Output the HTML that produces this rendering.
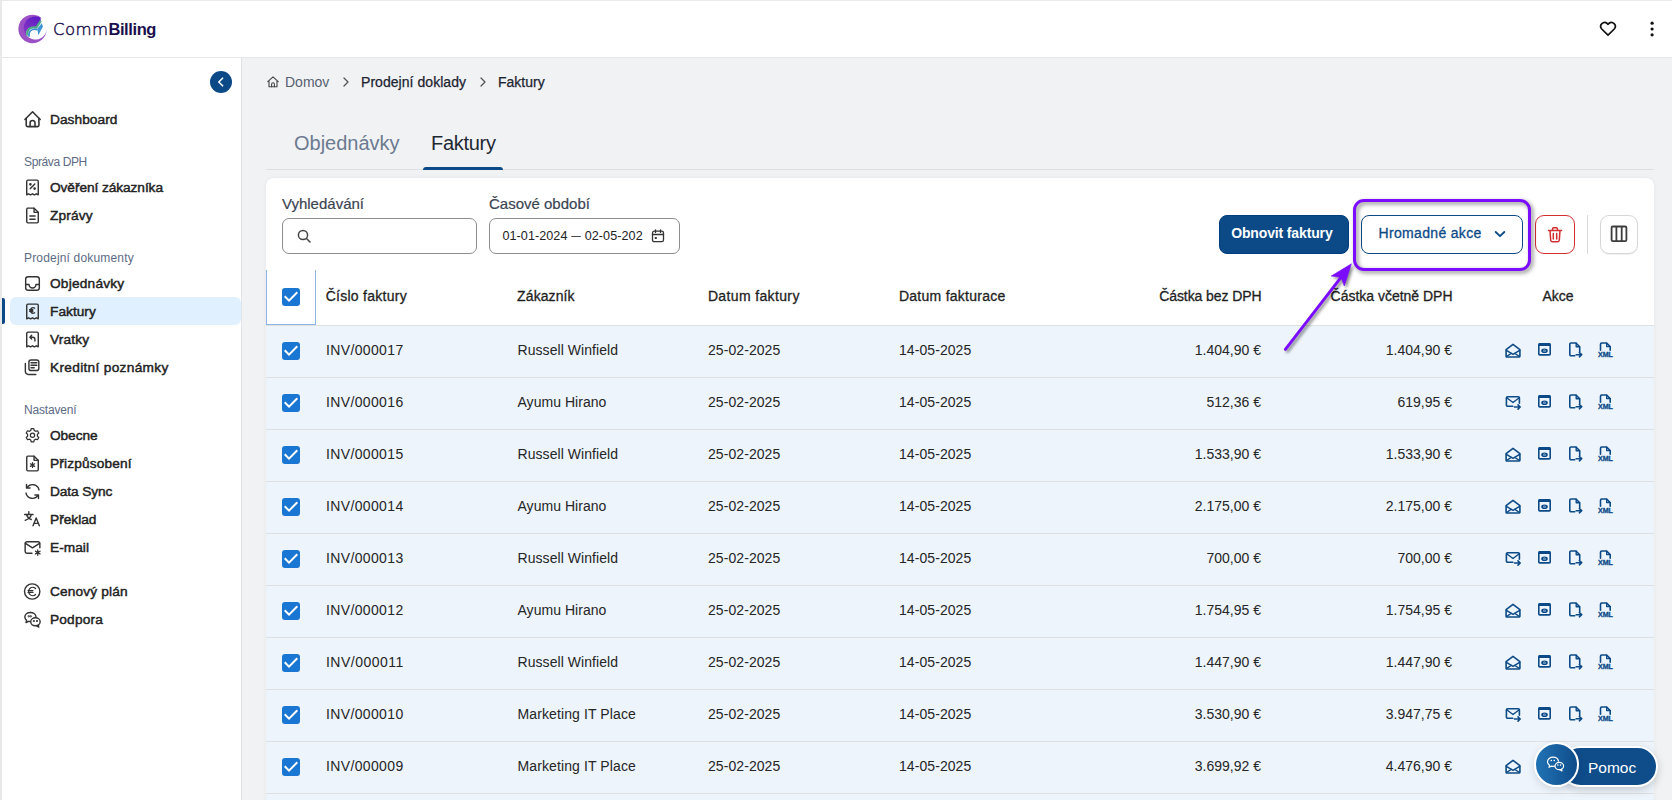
<!DOCTYPE html>
<html lang="cs">
<head>
<meta charset="utf-8">
<title>CommBilling – Faktury</title>
<style>
*{box-sizing:border-box;margin:0;padding:0}
html,body{width:1672px;height:800px;overflow:hidden;background:#f1f2f4;font-family:"Liberation Sans",sans-serif;color:#1f2937}
.abs{position:absolute}
#frameL{left:0;top:0;width:2px;height:800px;background:#e9e9e9}
#frameT{left:0;top:0;width:1672px;height:1px;background:#e9e9e9}
#header{left:2px;top:1px;width:1670px;height:57px;background:#fff;border-bottom:1px solid #e6e7ea}
#sidebar{left:2px;top:58px;width:240px;height:742px;background:#fff;border-right:1px solid #dfe3ea}
.nav{position:absolute;left:50px;font-size:13.7px;-webkit-text-stroke:.45px #222;color:#222;white-space:nowrap;line-height:20px;height:20px}
.navlbl{position:absolute;left:24px;font-size:12px;color:#5d6b85;white-space:nowrap;line-height:16px;height:16px}
.ico{position:absolute;left:21.5px;width:21px;height:21px;fill:none;stroke:#333;stroke-width:1.35;stroke-linecap:round;stroke-linejoin:round}
#active{left:10px;top:297px;width:230.6px;height:28px;background:#e1f0fe;border-radius:6px}
#activebar{left:2px;top:298px;width:3px;height:25.5px;background:#0c4a87;border-radius:0 2px 2px 0}
#collapse{left:210px;top:71px;width:22px;height:22px;border-radius:50%;background:#0c4a87}
.bc{position:absolute;top:74px;font-size:14px;line-height:16px;white-space:nowrap}
.tab{position:absolute;top:130px;font-size:20px;line-height:26px;white-space:nowrap}
#tabline{left:266px;top:169px;width:1388px;height:1px;background:#dcdfe4}
#tabul{left:423px;top:167px;width:80px;height:3px;background:#0c4a87;border-radius:3px 3px 0 0}
#card{left:266px;top:178px;width:1388px;height:640px;background:#fff;border-radius:8px 8px 0 0;box-shadow:0 0 5px rgba(0,0,0,.05)}
.flabel{position:absolute;top:196px;font-size:15px;line-height:16px;color:#3b4452;-webkit-text-stroke:.2px #3b4452;white-space:nowrap}
.inp{position:absolute;top:218px;height:36px;border:1px solid #8d8d8d;border-radius:7px;background:#fff}
.btn{position:absolute;top:215px;height:39px;border-radius:8px;white-space:nowrap;font-size:14px;line-height:34px;text-align:center}
.th{position:absolute;top:287px;font-size:14px;line-height:18px;color:#1f1f1f;-webkit-text-stroke:.3px #1f1f1f;white-space:nowrap}
.row{position:absolute;left:266px;width:1388px;height:52px;background:#edf4fc;border-bottom:1px solid #e0e0e0}
.row span{position:absolute;top:15px;font-size:14px;line-height:18px;color:#262626;white-space:nowrap}
.cb{position:absolute;width:18px;height:18px;border-radius:3px;background:#1976d2}
.cb svg{position:absolute;left:0;top:0}
.ai{position:absolute;top:15px;width:18px;height:18px;fill:none;stroke:#0c4a87;stroke-width:1.6;stroke-linecap:round;stroke-linejoin:round}
</style>
</head>
<body>
<div id="header" class="abs"></div>
<svg class="abs" style="left:12px;top:8px" width="48" height="42" viewBox="0 0 48 42">
<defs><linearGradient id="lg1" x1="0.7" y1="0" x2="0.2" y2="1"><stop offset="0" stop-color="#5f1cc4"/><stop offset="1" stop-color="#8a3cc6"/></linearGradient></defs>
<path d="M28.700 9.300A14.200 14.200 0 1 0 34.750 20.500A11.300 11.300 0 1 1 28.300 10.100z" fill="#9c50c5"/>
<path d="M28.500 9.600A11.800 11.800 0 0 0 14.400 27.900C13.600 22 16.500 18.400 24 19.400L28.800 12.500z" fill="url(#lg1)"/>
<path d="M15.300 27.600C14.500 22 17.500 18.600 24.300 19.600L28.800 12.900" fill="none" stroke="#4ea98b" stroke-width="2.300" stroke-linejoin="miter"/>
<path d="M25.300 20.800 29.700 15.200 31 18.400 26.300 27.300z" fill="#3f97d8"/>
<path d="M17 28.800C16 23.500 19.500 20.300 25.500 21.700" fill="none" stroke="#3d8fd0" stroke-width="1.500"/>
</svg><div class="abs" style="left:53px;top:16.500px;font-size:16.500px;line-height:24px;color:#1b0f4d;white-space:nowrap"><span style="font-family:'DejaVu Sans','Liberation Sans',sans-serif;font-weight:200;-webkit-text-stroke:0.45px #1b0f4d;letter-spacing:0.4px">Comm</span><span style="font-weight:bold;letter-spacing:-0.4px">Billing</span></div><svg class="abs" style="left:1598px;top:19px" width="20" height="20" viewBox="0 0 20 20" fill="none" stroke="#111" stroke-width="1.7" stroke-linejoin="round"><path d="M10 16.200 3.700 10a3.900 3.900 0 0 1 5.500-5.500l.8.800.8-.8A3.900 3.900 0 0 1 16.300 10z"/></svg><svg class="abs" style="left:1648px;top:19px" width="8" height="20" viewBox="0 0 8 20" fill="#111"><circle cx="4.100" cy="4.200" r="1.600"/><circle cx="4.100" cy="10" r="1.600"/><circle cx="4.100" cy="15.800" r="1.600"/></svg>
<div id="sidebar" class="abs"></div>
<div id="active" class="abs"></div><div id="activebar" class="abs"></div>
<div id="collapse" class="abs"><svg width="22" height="22" viewBox="0 0 22 22" fill="none" stroke="#fff" stroke-width="1.6" stroke-linecap="round" stroke-linejoin="round"><path d="M12.600 7.200 8.800 11l3.800 3.800"/></svg></div>
<svg class="ico" style="top:108.5px" viewBox="1 1 18 18"><path d="M3.500 10 10.050 3.400 16.600 10"/><path d="M4.600 9V15a1.100 1.100 0 0 0 1.100 1.100H14.400a1.100 1.100 0 0 0 1.100-1.100V9"/><path d="M7.950 16V12.900a2.100 2.100 0 0 1 4.200 0V16"/></svg>
<div class="nav" style="top:110px;letter-spacing:0.054px">Dashboard</div>
<div class="navlbl" style="top:154px;letter-spacing:-0.378px">Správa DPH</div>
<svg class="ico" style="top:176.5px" viewBox="0 0 20 20"><path d="M4.500 17V4.200a1.200 1.200 0 0 1 1.200-1.200h8.600a1.200 1.200 0 0 1 1.200 1.200V17l-1.800-1-1.900 1-1.800-1-1.800 1-1.900-1z"/><path d="M7.800 11.200l4.400-4.600"/><circle cx="8" cy="7" r=".6"/><circle cx="12" cy="11" r=".6"/></svg>
<div class="nav" style="top:178px;letter-spacing:-0.07px">Ověření zákazníka</div>
<svg class="ico" style="top:204.5px" viewBox="0 0 20 20"><path d="M5 3h6.500L15.500 7v8.800a1.200 1.200 0 0 1-1.200 1.200H5.700a1.200 1.200 0 0 1-1.200-1.200V4.200A1.200 1.200 0 0 1 5.700 3z"/><path d="M11.500 3v4h4"/><path d="M7.500 10.500h5M7.500 13.500h5"/></svg>
<div class="nav" style="top:206px;letter-spacing:0.151px">Zprávy</div>
<div class="navlbl" style="top:250px;letter-spacing:0.174px">Prodejní dokumenty</div>
<svg class="ico" style="top:272.5px" viewBox="0 0 20 20"><rect x="3.500" y="3.500" width="13" height="13" rx="2.500"/><path d="M3.500 11h3.200a3.300 3.300 0 0 0 6.600 0h3.200"/></svg>
<div class="nav" style="top:274px;letter-spacing:0.213px">Objednávky</div>
<svg class="ico" style="top:300.5px" viewBox="0 0 20 20"><path d="M4.500 17V4.200a1.200 1.200 0 0 1 1.200-1.200h8.600a1.200 1.200 0 0 1 1.200 1.200V17l-1.800-1-1.900 1-1.800-1-1.800 1-1.900-1z"/><path d="M12 6.800a2.600 2.600 0 1 0 0 4.400M7.300 8.300h3M7.300 9.800h3"/></svg>
<div class="nav" style="top:302px;letter-spacing:0.027px">Faktury</div>
<svg class="ico" style="top:328.5px" viewBox="0 0 20 20"><path d="M4.500 17V4.200a1.200 1.200 0 0 1 1.200-1.200h8.600a1.200 1.200 0 0 1 1.200 1.200V17l-1.800-1-1.900 1-1.800-1-1.800 1-1.900-1z"/><path d="M9.200 6 7.500 7.800l1.700 1.800M7.700 7.800h2.600a2 2 0 0 1 2 2v1.700"/></svg>
<div class="nav" style="top:330px;letter-spacing:0.161px">Vratky</div>
<svg class="ico" style="top:356.5px" viewBox="0 0 20 20"><rect x="6.600" y="2.850" width="9.400" height="10" rx="2"/><path d="M3.200 6.200v7.600a2.800 2.800 0 0 0 2.800 2.800h7.200"/><path d="M8.600 5.400h5.500M8.600 7.800h5.500M8.600 10.200h3"/></svg>
<div class="nav" style="top:358px;letter-spacing:0.309px">Kreditní poznámky</div>
<div class="navlbl" style="top:402px;letter-spacing:-0.191px">Nastavení</div>
<svg class="ico" style="top:424.5px" viewBox="0 0 20 20"><g transform="translate(10 9.800) scale(.88) translate(-10 -10)"><circle cx="10" cy="10" r="2.300"/><path d="M8.600 2.800h2.800l.5 2 1.500.9 2-.6 1.400 2.400-1.500 1.500v1.900l1.500 1.500-1.400 2.400-2-.6-1.500.9-.5 2H8.600l-.5-2-1.500-.9-2 .6-1.400-2.400L4.700 11V9L3.200 7.500l1.400-2.400 2 .6 1.500-.9z"/></g></svg>
<div class="nav" style="top:426px;letter-spacing:-0.071px">Obecne</div>
<svg class="ico" style="top:452.5px" viewBox="0 0 20 20"><path d="M5.700 3H11.500L15.500 7v8.800a1.200 1.200 0 0 1-1.200 1.200H5.700a1.200 1.200 0 0 1-1.200-1.200V4.200A1.200 1.200 0 0 1 5.700 3z"/><path d="M11.500 3v4h4"/><path d="M10 9.200v4.600M8 10.300l4 2.400M12 10.300l-4 2.400" stroke-width="1.200"/></svg>
<div class="nav" style="top:454px;letter-spacing:0.154px">Přizpůsobení</div>
<svg class="ico" style="top:480.5px" viewBox="0 0 20 20"><path d="M16.200 8.500A6.300 6.300 0 0 0 4.800 6.300"/><path d="M4.300 3.300v3.400h3.400"/><path d="M3.800 11.500a6.300 6.300 0 0 0 11.400 2.200"/><path d="M15.700 16.700v-3.400h-3.400"/></svg>
<div class="nav" style="top:482px;letter-spacing:-0.107px">Data Sync</div>
<svg class="ico" style="top:508.5px" viewBox="0 0 20 20"><g transform="translate(-.3 -1)"><path d="M2.800 6.200h8M6.800 3.500v2.700M9.300 6.200c-.6 2.600-2.800 4.600-6 5.600M4.500 6.200c.6 2 2.300 3.800 4.600 4.800" stroke-width="1.300"/><path d="M10.800 17l3-7.500 3 7.500M11.800 14.700h4"/></g></svg>
<div class="nav" style="top:510px;letter-spacing:-0.004px">Překlad</div>
<svg class="ico" style="top:536.5px" viewBox="0 0 20 20"><path d="M9.500 15.500H4.700a1.700 1.700 0 0 1-1.700-1.700V6.200a1.700 1.700 0 0 1 1.700-1.700h10.600a1.700 1.700 0 0 1 1.700 1.700v4"/><path d="M3.300 6 10 10.300 16.700 6"/><path d="M15 12.200v5.200M12.800 13.500l4.400 2.600M17.200 13.500l-4.400 2.600" stroke-width="1.200"/><circle cx="15" cy="14.800" r="1.300" fill="#333" stroke="none"/></svg>
<div class="nav" style="top:538px;letter-spacing:0.041px">E-mail</div>
<svg class="ico" style="top:580.5px" viewBox="0 0 20 20"><circle cx="9.700" cy="10" r="7.300"/><path d="M12.900 7.200a3.900 3.900 0 1 0 0 5.600M5.800 9.100h4.600M5.800 10.900h4.600" stroke-width="1.250"/></svg>
<div class="nav" style="top:582px;letter-spacing:0.141px">Cenový plán</div>
<svg class="ico" style="top:608.5px" viewBox="0 0 20 20"><path d="M8 3.300c-3 0-5.300 1.900-5.300 4.300 0 1.300.7 2.400 1.700 3.200l-.6 2.200 2.400-1.200c.4.100.8.100 1.200.100"/><path d="M8 3.300c2.900 0 5.200 1.800 5.300 4.100"/><ellipse cx="12.800" cy="12.200" rx="4.500" ry="3.800"/><path d="M15.500 15.300l.5 1.900-2-1.200"/><circle cx="6.400" cy="7" r=".4"/><circle cx="8.300" cy="7" r=".4"/><circle cx="11.300" cy="11.500" r=".4"/><circle cx="14.300" cy="11.500" r=".4"/></svg>
<div class="nav" style="top:610px;letter-spacing:0.175px">Podpora</div>
<svg class="abs" style="left:266px;top:75px" width="14" height="14" viewBox="0 0 14 14" fill="none" stroke="#444" stroke-width="1.100" stroke-linejoin="round" stroke-linecap="round"><path d="M1.800 6.600 7 1.800l5.200 4.800M3 5.800v6h8v-6"/><path d="M5.600 11.800V9.200a1.400 1.400 0 0 1 2.800 0v2.600"/></svg>
<div class="bc" style="left:285px;color:#566070">Domov</div>
<svg class="abs" style="left:341px;top:76px" width="10" height="12" viewBox="0 0 10 12" fill="none" stroke="#555" stroke-width="1.300" stroke-linecap="round" stroke-linejoin="round"><path d="M3 2l4 4-4 4"/></svg>
<div class="bc" style="left:361px;color:#1c2430;-webkit-text-stroke:.25px #1c2430;letter-spacing:.05px">Prodejní doklady</div>
<svg class="abs" style="left:478px;top:76px" width="10" height="12" viewBox="0 0 10 12" fill="none" stroke="#555" stroke-width="1.300" stroke-linecap="round" stroke-linejoin="round"><path d="M3 2l4 4-4 4"/></svg>
<div class="bc" style="left:498px;color:#1c2430;-webkit-text-stroke:.25px #1c2430">Faktury</div>
<div class="tab" style="left:294px;color:#6b7a90">Objednávky</div>
<div class="tab" style="left:431px;color:#1e2833;letter-spacing:-.3px">Faktury</div>
<div id="tabline" class="abs"></div><div id="tabul" class="abs"></div>
<div id="card" class="abs"></div>
<div class="flabel" style="left:282px">Vyhledávání</div>
<div class="inp" style="left:282px;width:195px"></div>
<svg class="abs" style="left:296px;top:228px" width="16" height="16" viewBox="0 0 16 16" fill="none" stroke="#444" stroke-width="1.500" stroke-linecap="round"><circle cx="7" cy="7" r="4.600"/><path d="M10.500 10.500 14 14"/></svg>
<div class="flabel" style="left:489px">Časové období</div>
<div class="inp" style="left:489px;width:191px"></div>
<div class="abs" style="left:502.400px;top:228px;font-size:12.600px;line-height:16px;color:#222;white-space:nowrap;letter-spacing:.07px">01-01-2024<span style="display:inline-block;width:17.200px;text-align:center;font-size:9px;letter-spacing:0;position:relative;top:-.8px;-webkit-text-stroke:.35px #222">—</span>02-05-202</div>
<svg class="abs" style="left:650px;top:228px" width="16" height="16" viewBox="0 0 16 16" fill="none" stroke="#333" stroke-width="1.300" stroke-linecap="round" stroke-linejoin="round"><rect x="2.500" y="3.200" width="11" height="10.500" rx="1.800"/><path d="M2.500 6.500h11M5.500 1.800v2.600M10.500 1.800v2.600"/><rect x="4.800" y="9" width="2" height="2" fill="#333" stroke="none"/></svg>
<div class="btn" style="left:1219px;width:130px;background:#0c4a87;border:1px solid #003d7e;color:#fff;font-weight:bold;letter-spacing:-.14px;text-align:left;padding-left:11.200px">Obnovit faktury</div>
<div class="btn" style="left:1361px;width:162px;background:#fff;border:1px solid #0c4a87;color:#0c4a87;text-align:left;padding-left:16.500px;letter-spacing:.33px;-webkit-text-stroke:.3px #0c4a87">Hromadné akce</div>
<svg class="abs" style="left:1493px;top:227px" width="14" height="14" viewBox="0 0 14 14" fill="none" stroke="#0c4a87" stroke-width="1.800" stroke-linecap="round" stroke-linejoin="round"><path d="M2.700 5 7 9.200l4.300-4.200"/></svg>
<div class="btn" style="left:1535px;width:40px;background:#fff;border:1px solid #d32f2f;border-radius:9px"></div>
<svg class="abs" style="left:1546px;top:224.500px" width="18" height="20" viewBox="0 0 18 20" fill="none" stroke="#d32f2f" stroke-width="1.500" stroke-linecap="round" stroke-linejoin="round"><path d="M2.500 5.500h13M6.500 5.500V4a1.200 1.200 0 0 1 1.200-1.200h2.600A1.200 1.200 0 0 1 11.500 4v1.500M4 5.500l.7 9.800a1.500 1.500 0 0 0 1.500 1.400h5.600a1.500 1.500 0 0 0 1.500-1.400l.7-9.800M7.300 8.500v5.500M10.700 8.500v5.500"/></svg>
<div class="abs" style="left:1587px;top:215px;width:1px;height:39px;background:#d9d9d9"></div>
<div class="btn" style="left:1600px;width:38px;background:#fff;border:1px solid #d6d6d6;border-radius:9px;box-shadow:0 1px 1px rgba(0,0,0,.06)"></div>
<svg class="abs" style="left:1609px;top:224px" width="20" height="20" viewBox="0 0 20 20" fill="none" stroke="#3d3d3d" stroke-width="1.800" stroke-linejoin="round"><rect x="2.600" y="2.500" width="14.800" height="14.700" rx="1.200"/><path d="M7.400 2.500v14.700M12.700 2.500v14.700"/></svg>
<div class="abs" style="left:266px;top:325px;width:1388px;height:1px;background:#e0e0e0"></div>
<div class="abs" style="left:266px;top:270px;width:50px;height:55px;border:1px solid #8db6e8;border-top:none"></div>
<div class="cb" style="left:282px;top:288px"><svg width="18" height="18" viewBox="0 0 18 18" fill="#fff"><path d="M7 14 2 9l1.410-1.410L7 11.170l7.590-7.590L16 5z"/></svg></div>
<div class="th" style="left:325.7px;letter-spacing:0.266px">Číslo faktury</div>
<div class="th" style="left:517.1px;letter-spacing:0.098px">Zákazník</div>
<div class="th" style="left:707.9px;letter-spacing:0.363px">Datum faktury</div>
<div class="th" style="left:898.9px;letter-spacing:0.27px">Datum fakturace</div>
<div class="th" style="right:410.42px;letter-spacing:-0.076px">Částka bez DPH</div>
<div class="th" style="right:219.49px;letter-spacing:-0.011px">Částka včetně DPH</div>
<div class="th" style="left:1528px;width:60px;text-align:center;letter-spacing:0.025px">Akce</div>
<div class="row" style="top:326px"><div class="cb" style="left:16px;top:16px"><svg width="18" height="18" viewBox="0 0 18 18" fill="#fff"><path d="M7 14 2 9l1.410-1.410L7 11.170l7.590-7.590L16 5z"/></svg></div><span style="left:60px;letter-spacing:0.361px">INV/000017</span><span style="left:251.500px;letter-spacing:0.06px">Russell Winfield</span><span style="left:442px;letter-spacing:.07px">25-02-2025</span><span style="left:633px;letter-spacing:.07px">14-05-2025</span><span style="right:393px">1.404,90 €</span><span style="right:202px">1.404,90 €</span><svg class="ai" style="left:1238px" viewBox="0 0 18 18"><path d="M2.100 8.600 9 3.400l6.900 5.200v6.600a.8.8 0 0 1-.8.8H2.900a.8.8 0 0 1-.8-.8z"/><path d="M2.400 9.300 9 13.300l6.600-4M2.600 15.500l4.900-3.300M15.400 15.500l-4.900-3.300" stroke-width="1.400"/></svg><svg class="ai" style="left:1269px" viewBox="0 0 18 18"><rect x="3.800" y="2.800" width="11.400" height="11.100" rx="1"/><rect x="3.800" y="2.100" width="11.400" height="3" rx=".6" fill="#0c4a87" stroke="none"/><ellipse cx="9.500" cy="9.700" rx="3.300" ry="2.300" fill="#0c4a87" stroke="none"/><circle cx="9.500" cy="9.700" r="1.250" fill="#9db9d9" stroke="none"/><circle cx="9.500" cy="9.700" r=".55" fill="#0c4a87" stroke="none"/></svg><svg class="ai" style="left:1300px" viewBox="0 0 18 18"><path d="M8.800 14.700H5a1.200 1.200 0 0 1-1.200-1.200V3.200A1.200 1.200 0 0 1 5 2h5l3.700 3.700v5"/><path d="M10.200 2.300v3.400h3.300" stroke-width="1.400"/><path d="M10.200 13.700h5.400M13.400 11.600l2.300 2.100-2.300 2.100"/></svg><svg class="ai" style="left:1330px" viewBox="0 0 18 18"><path d="M4.500 9.200V3.200A1.200 1.200 0 0 1 5.700 2h4.900L14.200 5.600v3.600"/><path d="M10.700 2.300v3.300h3.200" stroke-width="1.400"/><text x="9.450" y="16.100" text-anchor="middle" font-family="Liberation Sans, sans-serif" font-weight="bold" font-size="7.100" fill="#0c4a87" stroke="#0c4a87" stroke-width=".3">XML</text></svg></div>
<div class="row" style="top:378px"><div class="cb" style="left:16px;top:16px"><svg width="18" height="18" viewBox="0 0 18 18" fill="#fff"><path d="M7 14 2 9l1.410-1.410L7 11.170l7.590-7.590L16 5z"/></svg></div><span style="left:60px;letter-spacing:0.361px">INV/000016</span><span style="left:251.500px;letter-spacing:0.032px">Ayumu Hirano</span><span style="left:442px;letter-spacing:.07px">25-02-2025</span><span style="left:633px;letter-spacing:.07px">14-05-2025</span><span style="right:393px">512,36 €</span><span style="right:202px">619,95 €</span><svg class="ai" style="left:1238px" viewBox="0 0 18 18"><path d="M8.800 13.200H3.600a1.200 1.200 0 0 1-1.200-1.200V5a1.200 1.200 0 0 1 1.200-1.200h10.600A1.200 1.200 0 0 1 15.400 5v5.200"/><path d="M2.700 4.700 9 9.500l6.200-4.800" stroke-width="1.400"/><path d="M10.500 14h5.600M14 11.900l2.200 2.100-2.200 2.100"/></svg><svg class="ai" style="left:1269px" viewBox="0 0 18 18"><rect x="3.800" y="2.800" width="11.400" height="11.100" rx="1"/><rect x="3.800" y="2.100" width="11.400" height="3" rx=".6" fill="#0c4a87" stroke="none"/><ellipse cx="9.500" cy="9.700" rx="3.300" ry="2.300" fill="#0c4a87" stroke="none"/><circle cx="9.500" cy="9.700" r="1.250" fill="#9db9d9" stroke="none"/><circle cx="9.500" cy="9.700" r=".55" fill="#0c4a87" stroke="none"/></svg><svg class="ai" style="left:1300px" viewBox="0 0 18 18"><path d="M8.800 14.700H5a1.200 1.200 0 0 1-1.200-1.200V3.200A1.200 1.200 0 0 1 5 2h5l3.700 3.700v5"/><path d="M10.200 2.300v3.400h3.300" stroke-width="1.400"/><path d="M10.200 13.700h5.400M13.400 11.600l2.300 2.100-2.300 2.100"/></svg><svg class="ai" style="left:1330px" viewBox="0 0 18 18"><path d="M4.500 9.200V3.200A1.200 1.200 0 0 1 5.700 2h4.900L14.200 5.600v3.600"/><path d="M10.700 2.300v3.300h3.200" stroke-width="1.400"/><text x="9.450" y="16.100" text-anchor="middle" font-family="Liberation Sans, sans-serif" font-weight="bold" font-size="7.100" fill="#0c4a87" stroke="#0c4a87" stroke-width=".3">XML</text></svg></div>
<div class="row" style="top:430px"><div class="cb" style="left:16px;top:16px"><svg width="18" height="18" viewBox="0 0 18 18" fill="#fff"><path d="M7 14 2 9l1.410-1.410L7 11.170l7.590-7.590L16 5z"/></svg></div><span style="left:60px;letter-spacing:0.361px">INV/000015</span><span style="left:251.500px;letter-spacing:0.06px">Russell Winfield</span><span style="left:442px;letter-spacing:.07px">25-02-2025</span><span style="left:633px;letter-spacing:.07px">14-05-2025</span><span style="right:393px">1.533,90 €</span><span style="right:202px">1.533,90 €</span><svg class="ai" style="left:1238px" viewBox="0 0 18 18"><path d="M2.100 8.600 9 3.400l6.900 5.200v6.600a.8.8 0 0 1-.8.8H2.900a.8.8 0 0 1-.8-.8z"/><path d="M2.400 9.300 9 13.300l6.600-4M2.600 15.500l4.900-3.300M15.400 15.500l-4.900-3.300" stroke-width="1.400"/></svg><svg class="ai" style="left:1269px" viewBox="0 0 18 18"><rect x="3.800" y="2.800" width="11.400" height="11.100" rx="1"/><rect x="3.800" y="2.100" width="11.400" height="3" rx=".6" fill="#0c4a87" stroke="none"/><ellipse cx="9.500" cy="9.700" rx="3.300" ry="2.300" fill="#0c4a87" stroke="none"/><circle cx="9.500" cy="9.700" r="1.250" fill="#9db9d9" stroke="none"/><circle cx="9.500" cy="9.700" r=".55" fill="#0c4a87" stroke="none"/></svg><svg class="ai" style="left:1300px" viewBox="0 0 18 18"><path d="M8.800 14.700H5a1.200 1.200 0 0 1-1.200-1.200V3.200A1.200 1.200 0 0 1 5 2h5l3.700 3.700v5"/><path d="M10.200 2.300v3.400h3.300" stroke-width="1.400"/><path d="M10.200 13.700h5.400M13.400 11.600l2.300 2.100-2.300 2.100"/></svg><svg class="ai" style="left:1330px" viewBox="0 0 18 18"><path d="M4.500 9.200V3.200A1.200 1.200 0 0 1 5.700 2h4.900L14.200 5.600v3.600"/><path d="M10.700 2.300v3.300h3.200" stroke-width="1.400"/><text x="9.450" y="16.100" text-anchor="middle" font-family="Liberation Sans, sans-serif" font-weight="bold" font-size="7.100" fill="#0c4a87" stroke="#0c4a87" stroke-width=".3">XML</text></svg></div>
<div class="row" style="top:482px"><div class="cb" style="left:16px;top:16px"><svg width="18" height="18" viewBox="0 0 18 18" fill="#fff"><path d="M7 14 2 9l1.410-1.410L7 11.170l7.590-7.590L16 5z"/></svg></div><span style="left:60px;letter-spacing:0.361px">INV/000014</span><span style="left:251.500px;letter-spacing:0.032px">Ayumu Hirano</span><span style="left:442px;letter-spacing:.07px">25-02-2025</span><span style="left:633px;letter-spacing:.07px">14-05-2025</span><span style="right:393px">2.175,00 €</span><span style="right:202px">2.175,00 €</span><svg class="ai" style="left:1238px" viewBox="0 0 18 18"><path d="M2.100 8.600 9 3.400l6.900 5.200v6.600a.8.8 0 0 1-.8.8H2.900a.8.8 0 0 1-.8-.8z"/><path d="M2.400 9.300 9 13.300l6.600-4M2.600 15.500l4.900-3.300M15.400 15.500l-4.900-3.300" stroke-width="1.400"/></svg><svg class="ai" style="left:1269px" viewBox="0 0 18 18"><rect x="3.800" y="2.800" width="11.400" height="11.100" rx="1"/><rect x="3.800" y="2.100" width="11.400" height="3" rx=".6" fill="#0c4a87" stroke="none"/><ellipse cx="9.500" cy="9.700" rx="3.300" ry="2.300" fill="#0c4a87" stroke="none"/><circle cx="9.500" cy="9.700" r="1.250" fill="#9db9d9" stroke="none"/><circle cx="9.500" cy="9.700" r=".55" fill="#0c4a87" stroke="none"/></svg><svg class="ai" style="left:1300px" viewBox="0 0 18 18"><path d="M8.800 14.700H5a1.200 1.200 0 0 1-1.200-1.200V3.200A1.200 1.200 0 0 1 5 2h5l3.700 3.700v5"/><path d="M10.200 2.300v3.400h3.300" stroke-width="1.400"/><path d="M10.200 13.700h5.400M13.400 11.600l2.300 2.100-2.300 2.100"/></svg><svg class="ai" style="left:1330px" viewBox="0 0 18 18"><path d="M4.500 9.200V3.200A1.200 1.200 0 0 1 5.700 2h4.900L14.200 5.600v3.600"/><path d="M10.700 2.300v3.300h3.200" stroke-width="1.400"/><text x="9.450" y="16.100" text-anchor="middle" font-family="Liberation Sans, sans-serif" font-weight="bold" font-size="7.100" fill="#0c4a87" stroke="#0c4a87" stroke-width=".3">XML</text></svg></div>
<div class="row" style="top:534px"><div class="cb" style="left:16px;top:16px"><svg width="18" height="18" viewBox="0 0 18 18" fill="#fff"><path d="M7 14 2 9l1.410-1.410L7 11.170l7.590-7.590L16 5z"/></svg></div><span style="left:60px;letter-spacing:0.361px">INV/000013</span><span style="left:251.500px;letter-spacing:0.06px">Russell Winfield</span><span style="left:442px;letter-spacing:.07px">25-02-2025</span><span style="left:633px;letter-spacing:.07px">14-05-2025</span><span style="right:393px">700,00 €</span><span style="right:202px">700,00 €</span><svg class="ai" style="left:1238px" viewBox="0 0 18 18"><path d="M8.800 13.200H3.600a1.200 1.200 0 0 1-1.200-1.200V5a1.200 1.200 0 0 1 1.200-1.200h10.600A1.200 1.200 0 0 1 15.400 5v5.200"/><path d="M2.700 4.700 9 9.500l6.200-4.800" stroke-width="1.400"/><path d="M10.500 14h5.600M14 11.900l2.200 2.100-2.200 2.100"/></svg><svg class="ai" style="left:1269px" viewBox="0 0 18 18"><rect x="3.800" y="2.800" width="11.400" height="11.100" rx="1"/><rect x="3.800" y="2.100" width="11.400" height="3" rx=".6" fill="#0c4a87" stroke="none"/><ellipse cx="9.500" cy="9.700" rx="3.300" ry="2.300" fill="#0c4a87" stroke="none"/><circle cx="9.500" cy="9.700" r="1.250" fill="#9db9d9" stroke="none"/><circle cx="9.500" cy="9.700" r=".55" fill="#0c4a87" stroke="none"/></svg><svg class="ai" style="left:1300px" viewBox="0 0 18 18"><path d="M8.800 14.700H5a1.200 1.200 0 0 1-1.200-1.200V3.200A1.200 1.200 0 0 1 5 2h5l3.700 3.700v5"/><path d="M10.200 2.300v3.400h3.300" stroke-width="1.400"/><path d="M10.200 13.700h5.400M13.400 11.600l2.300 2.100-2.300 2.100"/></svg><svg class="ai" style="left:1330px" viewBox="0 0 18 18"><path d="M4.500 9.200V3.200A1.200 1.200 0 0 1 5.700 2h4.900L14.200 5.600v3.600"/><path d="M10.700 2.300v3.300h3.200" stroke-width="1.400"/><text x="9.450" y="16.100" text-anchor="middle" font-family="Liberation Sans, sans-serif" font-weight="bold" font-size="7.100" fill="#0c4a87" stroke="#0c4a87" stroke-width=".3">XML</text></svg></div>
<div class="row" style="top:586px"><div class="cb" style="left:16px;top:16px"><svg width="18" height="18" viewBox="0 0 18 18" fill="#fff"><path d="M7 14 2 9l1.410-1.410L7 11.170l7.590-7.590L16 5z"/></svg></div><span style="left:60px;letter-spacing:0.361px">INV/000012</span><span style="left:251.500px;letter-spacing:0.032px">Ayumu Hirano</span><span style="left:442px;letter-spacing:.07px">25-02-2025</span><span style="left:633px;letter-spacing:.07px">14-05-2025</span><span style="right:393px">1.754,95 €</span><span style="right:202px">1.754,95 €</span><svg class="ai" style="left:1238px" viewBox="0 0 18 18"><path d="M2.100 8.600 9 3.400l6.900 5.200v6.600a.8.8 0 0 1-.8.8H2.900a.8.8 0 0 1-.8-.8z"/><path d="M2.400 9.300 9 13.300l6.600-4M2.600 15.500l4.900-3.300M15.400 15.500l-4.900-3.300" stroke-width="1.400"/></svg><svg class="ai" style="left:1269px" viewBox="0 0 18 18"><rect x="3.800" y="2.800" width="11.400" height="11.100" rx="1"/><rect x="3.800" y="2.100" width="11.400" height="3" rx=".6" fill="#0c4a87" stroke="none"/><ellipse cx="9.500" cy="9.700" rx="3.300" ry="2.300" fill="#0c4a87" stroke="none"/><circle cx="9.500" cy="9.700" r="1.250" fill="#9db9d9" stroke="none"/><circle cx="9.500" cy="9.700" r=".55" fill="#0c4a87" stroke="none"/></svg><svg class="ai" style="left:1300px" viewBox="0 0 18 18"><path d="M8.800 14.700H5a1.200 1.200 0 0 1-1.200-1.200V3.200A1.200 1.200 0 0 1 5 2h5l3.700 3.700v5"/><path d="M10.200 2.300v3.400h3.300" stroke-width="1.400"/><path d="M10.200 13.700h5.400M13.400 11.600l2.300 2.100-2.300 2.100"/></svg><svg class="ai" style="left:1330px" viewBox="0 0 18 18"><path d="M4.500 9.200V3.200A1.200 1.200 0 0 1 5.700 2h4.900L14.200 5.600v3.600"/><path d="M10.700 2.300v3.300h3.200" stroke-width="1.400"/><text x="9.450" y="16.100" text-anchor="middle" font-family="Liberation Sans, sans-serif" font-weight="bold" font-size="7.100" fill="#0c4a87" stroke="#0c4a87" stroke-width=".3">XML</text></svg></div>
<div class="row" style="top:638px"><div class="cb" style="left:16px;top:16px"><svg width="18" height="18" viewBox="0 0 18 18" fill="#fff"><path d="M7 14 2 9l1.410-1.410L7 11.170l7.590-7.590L16 5z"/></svg></div><span style="left:60px;letter-spacing:0.477px">INV/000011</span><span style="left:251.500px;letter-spacing:0.06px">Russell Winfield</span><span style="left:442px;letter-spacing:.07px">25-02-2025</span><span style="left:633px;letter-spacing:.07px">14-05-2025</span><span style="right:393px">1.447,90 €</span><span style="right:202px">1.447,90 €</span><svg class="ai" style="left:1238px" viewBox="0 0 18 18"><path d="M2.100 8.600 9 3.400l6.900 5.200v6.600a.8.8 0 0 1-.8.8H2.900a.8.8 0 0 1-.8-.8z"/><path d="M2.400 9.300 9 13.300l6.600-4M2.600 15.500l4.900-3.300M15.400 15.500l-4.900-3.300" stroke-width="1.400"/></svg><svg class="ai" style="left:1269px" viewBox="0 0 18 18"><rect x="3.800" y="2.800" width="11.400" height="11.100" rx="1"/><rect x="3.800" y="2.100" width="11.400" height="3" rx=".6" fill="#0c4a87" stroke="none"/><ellipse cx="9.500" cy="9.700" rx="3.300" ry="2.300" fill="#0c4a87" stroke="none"/><circle cx="9.500" cy="9.700" r="1.250" fill="#9db9d9" stroke="none"/><circle cx="9.500" cy="9.700" r=".55" fill="#0c4a87" stroke="none"/></svg><svg class="ai" style="left:1300px" viewBox="0 0 18 18"><path d="M8.800 14.700H5a1.200 1.200 0 0 1-1.200-1.200V3.200A1.200 1.200 0 0 1 5 2h5l3.700 3.700v5"/><path d="M10.200 2.300v3.400h3.300" stroke-width="1.400"/><path d="M10.200 13.700h5.400M13.400 11.600l2.300 2.100-2.300 2.100"/></svg><svg class="ai" style="left:1330px" viewBox="0 0 18 18"><path d="M4.500 9.200V3.200A1.200 1.200 0 0 1 5.700 2h4.900L14.200 5.600v3.600"/><path d="M10.700 2.300v3.300h3.200" stroke-width="1.400"/><text x="9.450" y="16.100" text-anchor="middle" font-family="Liberation Sans, sans-serif" font-weight="bold" font-size="7.100" fill="#0c4a87" stroke="#0c4a87" stroke-width=".3">XML</text></svg></div>
<div class="row" style="top:690px"><div class="cb" style="left:16px;top:16px"><svg width="18" height="18" viewBox="0 0 18 18" fill="#fff"><path d="M7 14 2 9l1.410-1.410L7 11.170l7.590-7.590L16 5z"/></svg></div><span style="left:60px;letter-spacing:0.361px">INV/000010</span><span style="left:251.500px;letter-spacing:0.108px">Marketing IT Place</span><span style="left:442px;letter-spacing:.07px">25-02-2025</span><span style="left:633px;letter-spacing:.07px">14-05-2025</span><span style="right:393px">3.530,90 €</span><span style="right:202px">3.947,75 €</span><svg class="ai" style="left:1238px" viewBox="0 0 18 18"><path d="M8.800 13.200H3.600a1.200 1.200 0 0 1-1.200-1.200V5a1.200 1.200 0 0 1 1.200-1.200h10.600A1.200 1.200 0 0 1 15.400 5v5.200"/><path d="M2.700 4.700 9 9.500l6.200-4.800" stroke-width="1.400"/><path d="M10.500 14h5.600M14 11.900l2.200 2.100-2.200 2.100"/></svg><svg class="ai" style="left:1269px" viewBox="0 0 18 18"><rect x="3.800" y="2.800" width="11.400" height="11.100" rx="1"/><rect x="3.800" y="2.100" width="11.400" height="3" rx=".6" fill="#0c4a87" stroke="none"/><ellipse cx="9.500" cy="9.700" rx="3.300" ry="2.300" fill="#0c4a87" stroke="none"/><circle cx="9.500" cy="9.700" r="1.250" fill="#9db9d9" stroke="none"/><circle cx="9.500" cy="9.700" r=".55" fill="#0c4a87" stroke="none"/></svg><svg class="ai" style="left:1300px" viewBox="0 0 18 18"><path d="M8.800 14.700H5a1.200 1.200 0 0 1-1.200-1.200V3.200A1.200 1.200 0 0 1 5 2h5l3.700 3.700v5"/><path d="M10.200 2.300v3.400h3.300" stroke-width="1.400"/><path d="M10.200 13.700h5.400M13.400 11.600l2.300 2.100-2.300 2.100"/></svg><svg class="ai" style="left:1330px" viewBox="0 0 18 18"><path d="M4.500 9.200V3.200A1.200 1.200 0 0 1 5.700 2h4.900L14.200 5.600v3.600"/><path d="M10.700 2.300v3.300h3.200" stroke-width="1.400"/><text x="9.450" y="16.100" text-anchor="middle" font-family="Liberation Sans, sans-serif" font-weight="bold" font-size="7.100" fill="#0c4a87" stroke="#0c4a87" stroke-width=".3">XML</text></svg></div>
<div class="row" style="top:742px"><div class="cb" style="left:16px;top:16px"><svg width="18" height="18" viewBox="0 0 18 18" fill="#fff"><path d="M7 14 2 9l1.410-1.410L7 11.170l7.590-7.590L16 5z"/></svg></div><span style="left:60px;letter-spacing:0.361px">INV/000009</span><span style="left:251.500px;letter-spacing:0.108px">Marketing IT Place</span><span style="left:442px;letter-spacing:.07px">25-02-2025</span><span style="left:633px;letter-spacing:.07px">14-05-2025</span><span style="right:393px">3.699,92 €</span><span style="right:202px">4.476,90 €</span><svg class="ai" style="left:1238px" viewBox="0 0 18 18"><path d="M2.100 8.600 9 3.400l6.900 5.200v6.600a.8.8 0 0 1-.8.8H2.900a.8.8 0 0 1-.8-.8z"/><path d="M2.400 9.300 9 13.300l6.600-4M2.600 15.500l4.900-3.300M15.400 15.500l-4.900-3.300" stroke-width="1.400"/></svg><svg class="ai" style="left:1269px" viewBox="0 0 18 18"><rect x="3.800" y="2.800" width="11.400" height="11.100" rx="1"/><rect x="3.800" y="2.100" width="11.400" height="3" rx=".6" fill="#0c4a87" stroke="none"/><ellipse cx="9.500" cy="9.700" rx="3.300" ry="2.300" fill="#0c4a87" stroke="none"/><circle cx="9.500" cy="9.700" r="1.250" fill="#9db9d9" stroke="none"/><circle cx="9.500" cy="9.700" r=".55" fill="#0c4a87" stroke="none"/></svg><svg class="ai" style="left:1300px" viewBox="0 0 18 18"><path d="M8.800 14.700H5a1.200 1.200 0 0 1-1.200-1.200V3.200A1.200 1.200 0 0 1 5 2h5l3.700 3.700v5"/><path d="M10.200 2.300v3.400h3.300" stroke-width="1.400"/><path d="M10.200 13.700h5.400M13.400 11.600l2.300 2.100-2.300 2.100"/></svg><svg class="ai" style="left:1330px" viewBox="0 0 18 18"><path d="M4.500 9.200V3.200A1.200 1.200 0 0 1 5.700 2h4.900L14.200 5.600v3.600"/><path d="M10.700 2.300v3.300h3.200" stroke-width="1.400"/><text x="9.450" y="16.100" text-anchor="middle" font-family="Liberation Sans, sans-serif" font-weight="bold" font-size="7.100" fill="#0c4a87" stroke="#0c4a87" stroke-width=".3">XML</text></svg></div>
<div class="row" style="top:794px"><div class="cb" style="left:16px;top:16px"><svg width="18" height="18" viewBox="0 0 18 18" fill="#fff"><path d="M7 14 2 9l1.410-1.410L7 11.170l7.590-7.590L16 5z"/></svg></div><span style="left:60px;letter-spacing:0.361px">INV/000008</span><span style="left:251.500px;letter-spacing:0.108px">Marketing IT Place</span><span style="left:442px;letter-spacing:.07px">25-02-2025</span><span style="left:633px;letter-spacing:.07px">14-05-2025</span><span style="right:393px">2.100,00 €</span><span style="right:202px">2.541,00 €</span><svg class="ai" style="left:1238px" viewBox="0 0 18 18"><path d="M2.100 8.600 9 3.400l6.900 5.200v6.600a.8.8 0 0 1-.8.8H2.900a.8.8 0 0 1-.8-.8z"/><path d="M2.400 9.300 9 13.300l6.600-4M2.600 15.500l4.900-3.300M15.400 15.500l-4.900-3.300" stroke-width="1.400"/></svg><svg class="ai" style="left:1269px" viewBox="0 0 18 18"><rect x="3.800" y="2.800" width="11.400" height="11.100" rx="1"/><rect x="3.800" y="2.100" width="11.400" height="3" rx=".6" fill="#0c4a87" stroke="none"/><ellipse cx="9.500" cy="9.700" rx="3.300" ry="2.300" fill="#0c4a87" stroke="none"/><circle cx="9.500" cy="9.700" r="1.250" fill="#9db9d9" stroke="none"/><circle cx="9.500" cy="9.700" r=".55" fill="#0c4a87" stroke="none"/></svg><svg class="ai" style="left:1300px" viewBox="0 0 18 18"><path d="M8.800 14.700H5a1.200 1.200 0 0 1-1.200-1.200V3.200A1.200 1.200 0 0 1 5 2h5l3.700 3.700v5"/><path d="M10.200 2.300v3.400h3.300" stroke-width="1.400"/><path d="M10.200 13.700h5.400M13.400 11.600l2.300 2.100-2.300 2.100"/></svg><svg class="ai" style="left:1330px" viewBox="0 0 18 18"><path d="M4.500 9.200V3.200A1.200 1.200 0 0 1 5.700 2h4.900L14.200 5.600v3.600"/><path d="M10.700 2.300v3.300h3.200" stroke-width="1.400"/><text x="9.450" y="16.100" text-anchor="middle" font-family="Liberation Sans, sans-serif" font-weight="bold" font-size="7.100" fill="#0c4a87" stroke="#0c4a87" stroke-width=".3">XML</text></svg></div>
<div class="abs" style="left:1353px;top:198.500px;width:177.500px;height:72.800px;border:3.200px solid #7b0cff;border-radius:11px;filter:drop-shadow(2px 2px 2px rgba(0,0,0,.5))"></div>
<svg class="abs" style="left:1270px;top:255px;filter:drop-shadow(2px 2px 1.500px rgba(0,0,0,.45))" width="100" height="110" viewBox="0 0 100 110"><path d="M15.400 94.300 71 22.300" fill="none" stroke="#7b0cff" stroke-width="3" stroke-linecap="round"/><path d="M81.400 8.800 74.300 31 71 22.300 61.200 21.100z" fill="#7b0cff" stroke="#7b0cff" stroke-width=".6" stroke-linejoin="round"/></svg>
<div class="abs" style="left:1560px;top:746px;width:98px;height:41px;border-radius:21px;background:#0f4c8a;border:2px solid #fff;box-shadow:0 3px 8px rgba(0,0,0,.18)"></div>
<div class="abs" style="left:1588px;top:758px;font-size:15.500px;line-height:20px;color:#fff;white-space:nowrap">Pomoc</div>
<div class="abs" style="left:1534.300px;top:742px;width:45px;height:45px;border-radius:50%;background:linear-gradient(90deg,#2173b5,#0f4c8a);border:2px solid #fff;box-shadow:0 3px 8px rgba(0,0,0,.12)"></div>
<svg class="abs" style="left:1545px;top:754px" width="22" height="20" viewBox="0 0 22 20" fill="none" stroke="#fff" stroke-width="1.200" stroke-linecap="round" stroke-linejoin="round"><path d="M9.500 12.200c-.6.100-1 .100-1.500.100-.5 0-1-.100-1.500-.200L4 13.300l.6-2C3.300 10.400 2.500 9.200 2.500 7.800 2.500 5.200 5 3.200 8 3.200c2.800 0 5.100 1.700 5.400 4"/><ellipse cx="14.300" cy="12" rx="4.300" ry="3.700"/><path d="M16.500 15.200l.5 1.700-1.900-1"/><path d="M6.300 6.600h.1M9.200 6.600h.1M12.800 11h.1M15.500 11h.1" stroke-width="1.500"/></svg>
<div id="frameL" class="abs"></div>
<div id="frameT" class="abs"></div>
</body>
</html>
